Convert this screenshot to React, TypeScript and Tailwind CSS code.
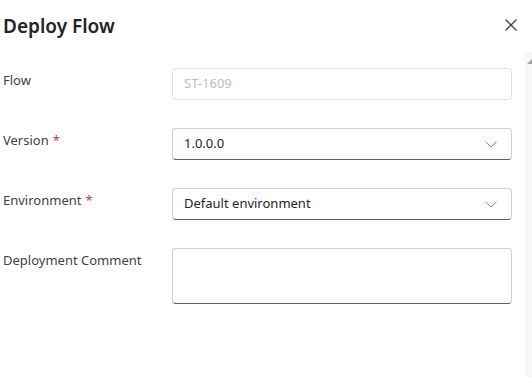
import React from "react";

const font = { fontFamily: '"Noto Sans", "Open Sans", sans-serif' };

function Chevron() {
  return (
    <svg width="12" height="7" viewBox="0 0 12 7" className="text-[#707070]">
      <path d="M0.5 0.8 L6 6 L11.5 0.8" fill="none" stroke="currentColor" strokeWidth="0.9" />
    </svg>
  );
}

function Row({ label, required, children }: { label: string; required?: boolean; children: React.ReactNode }) {
  return (
    <div className="flex">
      <div className="w-[169px] shrink-0 pt-[2px] text-[13px] leading-[20px] text-[#424242]">
        {label}
        {required && <span className="ml-[4px] text-[#d13438]">*</span>}
      </div>
      <div className="w-[341px]">{children}</div>
    </div>
  );
}

export default function App() {
  return (
    <div className="relative w-[532px] h-[377px] bg-white overflow-hidden" style={font}>
      <div className="absolute right-0 top-[52px] bottom-0 w-[7px] bg-[#f7f7f7]">
        <svg width="5" height="5" viewBox="0 0 5 5" className="absolute left-[2px] top-[7px]">
          <path d="M0 5 L5 0 L5 5 Z" fill="#a3a3a3" />
        </svg>
      </div>
      <div className="pl-[3px] pr-[20px]">
        <div className="flex items-center justify-between h-[50px] pt-[1px]">
          <div className="text-[19px] font-semibold text-[#242424] leading-[28px]">Deploy Flow</div>
          <svg width="12" height="12" viewBox="0 0 12 12" className="mr-[-5px] mt-[-2px]">
            <path d="M0.5 0.5 L11.5 11.5 M11.5 0.5 L0.5 11.5" stroke="#424242" strokeWidth="1.3" />
          </svg>
        </div>
        <div className="mt-[18px] flex flex-col gap-[28px]">
          <Row label="Flow">
            <div className="h-[32px] rounded-[4px] border border-[#e0e0e0] flex items-center px-[11px] text-[13px] text-[#bdbdbd]">
              ST-1609
            </div>
          </Row>
          <Row label="Version" required>
            <div className="h-[32px] rounded-[4px] border border-[#d1d1d1] border-b-[#616161] flex items-center justify-between px-[11px] pr-[14px] text-[13px] text-[#242424]">
              <span>1.0.0.0</span>
              <Chevron />
            </div>
          </Row>
          <Row label="Environment" required>
            <div className="h-[32px] rounded-[4px] border border-[#d1d1d1] border-b-[#616161] flex items-center justify-between px-[11px] pr-[14px] text-[13px] text-[#242424]">
              <span>Default environment</span>
              <Chevron />
            </div>
          </Row>
          <Row label="Deployment Comment">
            <div className="h-[56px] rounded-[4px] border border-[#d1d1d1] border-b-[#616161]" />
          </Row>
        </div>
      </div>
    </div>
  );
}
